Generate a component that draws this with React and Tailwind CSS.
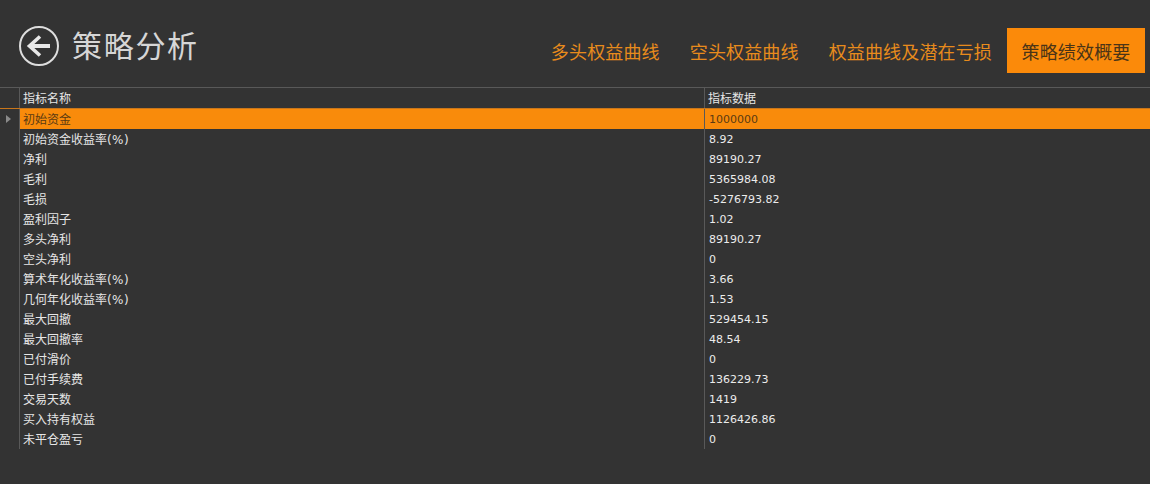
const rows = [
  ["初始资金", "1000000"],
  ["初始资金收益率", "8.92", true],
  ["净利", "89190.27"],
  ["毛利", "5365984.08"],
  ["毛损", "-5276793.82"],
  ["盈利因子", "1.02"],
  ["多头净利", "89190.27"],
  ["空头净利", "0"],
  ["算术年化收益率", "3.66", true],
  ["几何年化收益率", "1.53", true],
  ["最大回撤", "529454.15"],
  ["最大回撤率", "48.54"],
  ["已付滑价", "0"],
  ["已付手续费", "136229.73"],
  ["交易天数", "1419"],
  ["买入持有权益", "1126426.86"],
  ["未平仓盈亏", "0"],
];

const tabs = ["多头权益曲线", "空头权益曲线", "权益曲线及潜在亏损"];

function BackIcon() {
  return (
    <svg width="40" height="40" viewBox="0 0 40 40" fill="none">
      <circle cx="20" cy="20" r="19" stroke="#dedede" strokeWidth="2" />
      <path d="M12 20H31" stroke="#e8e8e8" strokeWidth="4" />
      <path d="M21 10.5L10.5 20L21 29.5" stroke="#e8e8e8" strokeWidth="3.6" />
    </svg>
  );
}

function App() {
  return (
    <div
      className="w-[1150px] h-[484px] overflow-hidden bg-[#333333] text-[#e6e6e6]"
      style={{ fontFamily: '"DejaVu Sans", "Noto Sans CJK SC", sans-serif' }}
    >
      <header className="h-[88px] flex items-start border-b border-[#595959]">
        <div className="flex items-start pl-[19px] pt-[26px]">
          <BackIcon />
          <h1
            className="ml-[13px] text-[30px] leading-[36px] tracking-[1.7px] font-normal text-[#d6d6d6]"
            style={{ fontFamily: '"Noto Sans CJK SC", sans-serif' }}
          >
            策略分析
          </h1>
        </div>
        <nav
          className="ml-auto mr-[5px] mt-[28px] flex items-center text-[18px] tracking-[0.15px] text-[#e88b1c]"
          style={{ fontFamily: '"Noto Sans CJK SC", sans-serif' }}
        >
          {tabs.map((tab) => (
            <div key={tab} className="px-[15px] h-[45px] leading-[46px]">
              {tab}
            </div>
          ))}
          <div className="w-[138px] h-[45px] leading-[46px] text-center bg-[#fb8a0a] text-[#4a3417]">
            策略绩效概要
          </div>
        </nav>
      </header>

      <div className="text-[12px] leading-[22px]">
        <div className="flex h-[21px] border-b border-[#c9761a]">
          <div className="w-[20px] border-r border-[#595959]" />
          <div className="w-[685px] pl-[3px] border-r border-[#595959]">指标名称</div>
          <div className="pl-[3px]">指标数据</div>
        </div>
        {rows.map(([name, value, pct], i) => (
          <div key={name} className="flex h-[20px]">
            <div className="w-[20px] flex items-center justify-center border-r border-[#595959]">
              {i === 0 && (
                <span className="ml-[-3px] border-y-[4px] border-l-[5px] border-y-transparent border-l-[#8a8a8a]" />
              )}
            </div>
            <div
              className={`w-[685px] pl-[3px] border-r border-[#595959] ${
                i === 0 ? "bg-[#f98b0b] text-[#5a3a12]" : ""
              }`}
            >
              {name}
              {pct && <span className="tracking-[0.4px]">(%)</span>}
            </div>
            <div className={`flex-1 pl-[4px] text-[11px] ${i === 0 ? "bg-[#f98b0b] text-[#5a3a12]" : "text-[#ececec]"}`}>
              {value}
            </div>
          </div>
        ))}
      </div>
    </div>
  );
}

export default App;
